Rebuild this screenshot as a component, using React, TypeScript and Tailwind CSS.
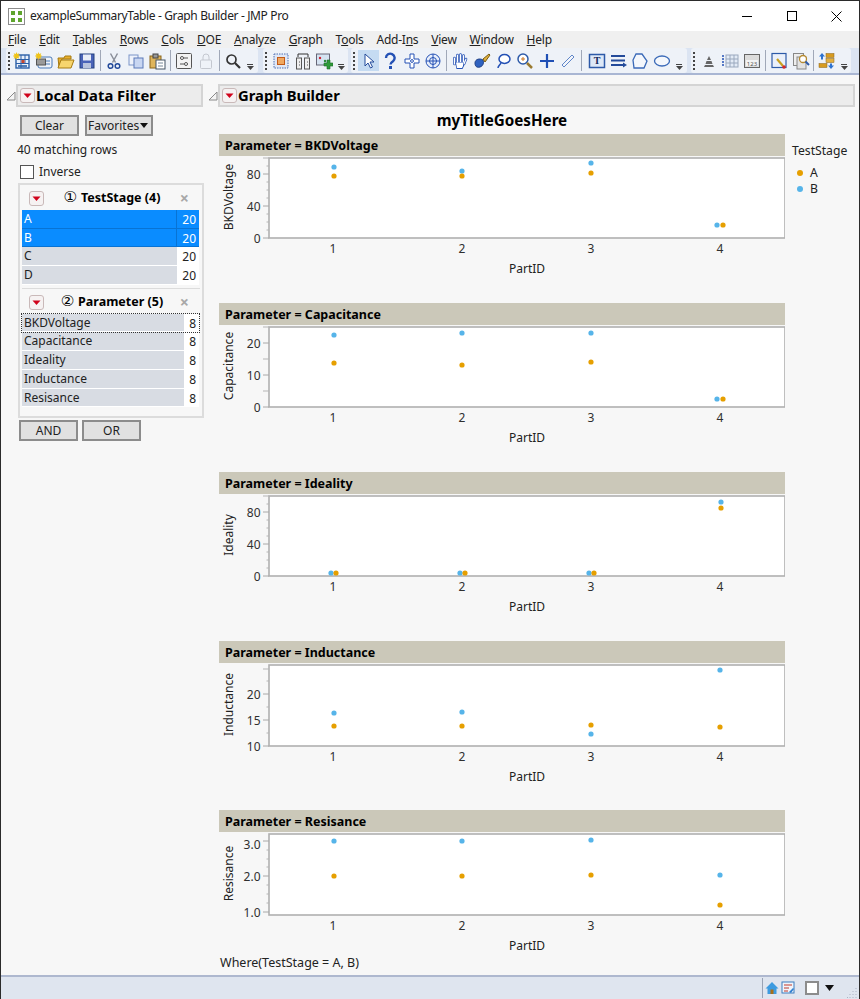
import React from 'react'

const FONT = { fontFamily: '"Noto Sans", "Open Sans", sans-serif' }
const BLUE = '#56b4e9'
const ORANGE = '#e69f00'

type Dot = [number, number, string]
interface PanelProps {
  name: string
  height: number
  labels: [string, number, number][]
  ticks: number[]
  longTicks: number[]
  dots: Dot[]
}

const panels: PanelProps[] = [
  {
    name: 'BKDVoltage', height: 80,
    labels: [['80', 18, 18], ['40', 50, 50], ['0', 82, 82]],
    ticks: [10, 26, 34, 42, 58, 66, 74],
    longTicks: [2],
    dots: [[115, 11, BLUE], [115, 20, ORANGE], [243, 15, BLUE], [243, 20, ORANGE], [372, 7, BLUE], [372, 17, ORANGE], [498, 69, BLUE], [504, 69, ORANGE]],
  },
  {
    name: 'Capacitance', height: 80,
    labels: [['20', 18, 18], ['10', 50, 50], ['0', 82, 82]],
    ticks: [],
    longTicks: [2, 34, 66],
    dots: [[115, 10, BLUE], [115, 38, ORANGE], [243, 8, BLUE], [243, 40, ORANGE], [372, 8, BLUE], [372, 37, ORANGE], [498, 74, BLUE], [504, 74, ORANGE]],
  },
  {
    name: 'Ideality', height: 80,
    labels: [['80', 18, 18], ['40', 50, 50], ['0', 82, 82]],
    ticks: [10, 26, 34, 42, 58, 66, 74],
    longTicks: [2],
    dots: [[112, 79, BLUE], [117, 79, ORANGE], [241, 79, BLUE], [246, 79, ORANGE], [370, 79, BLUE], [375, 79, ORANGE], [502, 8, BLUE], [502, 14, ORANGE]],
  },
  {
    name: 'Inductance', height: 81,
    labels: [['20', 31, 31], ['15', 57, 57], ['10', 83, 83]],
    ticks: [18, 44, 70],
    longTicks: [6],
    dots: [[115, 50, BLUE], [115, 63, ORANGE], [243, 49, BLUE], [243, 63, ORANGE], [372, 62, ORANGE], [372, 71, BLUE], [501, 7, BLUE], [501, 64, ORANGE]],
  },
  {
    name: 'Resisance', height: 81,
    labels: [['3.0', 9, 12], ['2.0', 44, 44], ['1.0', 80, 80]],
    ticks: [18, 27, 35, 53, 62, 71],
    longTicks: [],
    dots: [[115, 9, BLUE], [115, 44, ORANGE], [243, 9, BLUE], [243, 44, ORANGE], [372, 8, BLUE], [372, 43, ORANGE], [501, 43, BLUE], [501, 73, ORANGE]],
  },
]

const Chart = ({ name, height, labels, ticks, longTicks, dots }: PanelProps) => (
  <div className="w-[566px]">
    <div className="h-[22px] bg-[#cbc8b9] pl-[6px] text-[12.5px] leading-[23px] font-bold text-black">Parameter = {name}</div>
    <svg width="566" height="123" className="block">
      <rect x="50" y="2" width="516" height={height} fill="#fff" stroke="#b0b0b0" strokeWidth="1.6" />
      {labels.map(([t, y]) => <line key={t} x1="44" x2="50" y1={y} y2={y} stroke="#a8a8a8" />)}
      {longTicks.map((y) => <line key={y} x1="44" x2="50" y1={y} y2={y} stroke="#b5b5b5" />)}
      {ticks.map((y) => <line key={y} x1="47.5" x2="50" y1={y} y2={y} stroke="#b5b5b5" />)}
      {labels.map(([t, , y]) => (
        <text key={t} x="41.5" y={y + 4.5} textAnchor="end" fontSize="12" fill="#2f2f2f" style={FONT}>{t}</text>
      ))}
      <text transform={`translate(14 ${1 + height / 2}) rotate(-90)`} textAnchor="middle" fontSize="12" fill="#222" style={FONT}>{name}</text>
      {[1, 2, 3, 4].map((n, i) => (
        <text key={n} x={114 + i * 129} y={height + 17} textAnchor="middle" fontSize="12" fill="#2f2f2f" style={FONT}>{n}</text>
      ))}
      <text x="308" y={height + 37} textAnchor="middle" fontSize="12" fill="#222" style={FONT}>PartID</text>
      {dots.map(([x, y, c], i) => <circle key={i} cx={x} cy={y} r="2.6" fill={c} />)}
    </svg>
  </div>
)

const RedButton = () => (
  <svg width="15" height="15" viewBox="0 0 15 15" className="shrink-0">
    <rect x="0.5" y="0.5" width="14" height="14" rx="2.5" fill="#f6f2f2" stroke="#c9b9b9" />
    <path d="M3.5 5.5h8l-4 4.5z" fill="#d0021b" />
  </svg>
)

const Disclose = () => (
  <svg width="10" height="10" viewBox="0 0 10 10" className="shrink-0">
    <path d="M1 9h8V1z" fill="#f4f4f4" stroke="#8a8a8a" />
  </svg>
)

const OutlineHeader = ({ title, className }: { title: string; className: string }) => (
  <div className={`flex items-center ${className}`}>
    <Disclose />
    <div className="flex h-[23px] flex-1 items-center gap-[1px] border-2 border-[#d4d4d4] bg-[#ececec] pl-[2px] text-[14.8px] font-bold text-black">
      <RedButton />
      <span>{title}</span>
    </div>
  </div>
)

const GrayButton = ({ label, className }: { label: string; className: string }) => (
  <button className={`flex h-[21px] items-center justify-center border-2 border-[#8c8c8c] bg-[#e1e1e1] text-[12px] leading-[19px] text-[#222] ${className}`}>{label}</button>
)

const FilterHeader = ({ mark, title, height }: { mark: string; title: string; height: string }) => (
  <div className={`flex items-center pl-[7px] pr-[11px] ${height}`}>
    <RedButton />
    <div className="flex-1 text-center text-[12.5px] font-bold text-black">
      <span className="mr-[4px] text-[15px] leading-none font-normal" style={{ fontFamily: '"DejaVu Sans", sans-serif' }}>{mark}</span>{title}
    </div>
    <span className="text-[16px] leading-none font-bold text-[#a8a8a8]">×</span>
  </div>
)

const Row = ({ label, count, selected, focused, barWidth }: { label: string; count: number; selected?: boolean; focused?: boolean; barWidth: string }) => (
  <div className={`flex h-[18.7px] w-[177px] items-stretch text-[12px] ${selected ? 'border-b border-[#0873d4] bg-[#0a8cff] text-white' : 'bg-white text-[#222]'} ${focused ? 'outline-1 outline-dotted outline-[#333]' : ''}`}>
    <div className={`${barWidth} pl-[2px] leading-[18px] ${selected ? 'border-r border-[#0873d4]' : 'mb-[1px] bg-[#d8dce3]'}`}>{label}</div>
    <div className="flex-1 pr-[3px] text-right leading-[19px]">{count}</div>
  </div>
)

/* toolbar icons */
const I = ({ children }: { children: React.ReactNode }) => (
  <div className="flex h-[22px] w-[21.7px] shrink-0 items-center justify-center">
    <svg width="18" height="18" viewBox="0 0 18 18" fill="none">{children}</svg>
  </div>
)
const Grip = () => (
  <div className="ml-[2px] mr-[3px] flex h-[18px] w-[2px] shrink-0 flex-col justify-between">
    {[0, 1, 2, 3, 4].map((n) => <div key={n} className="h-[2px] w-[2px] bg-[#444]" />)}
  </div>
)
const Sep = () => <div className="mx-[2px] h-[21px] w-[1px] shrink-0 bg-[#a0a8b8]" />
const More = () => (
  <div className="ml-auto mr-[2px] flex h-[20px] w-[12px] shrink-0 flex-col items-center justify-end pb-[1px]">
    <div className="h-[1px] w-[6px] bg-[#444]" />
    <svg width="7" height="4" viewBox="0 0 7 4" className="mt-[1px]"><path d="M0 0h7L3.5 4z" fill="#444" /></svg>
  </div>
)
const Group = ({ w, children }: { w: string; children: React.ReactNode }) => (
  <div className={`flex h-[25px] shrink-0 items-center rounded-[3px] bg-[#eef2f8] ${w}`}>{children}</div>
)
const Sparkle = () => <path d="M3.500 0l.8 2 2-.8-.8 2 2 .8-2 .8.8 2-2-.8-.8 2-.8-2-2 .8.8-2-2-.8 2-.8-.8-2 2 .8z" fill="#f0c419" />

const Toolbar = () => (
  <div className="flex h-[27px] shrink-0 items-center border-b-2 border-[#a9b6d3] bg-[#dbe4f2] pl-[5px]">
    <Group w="w-[252px] mr-[5px]">
      <div className="-mr-[1.5px] flex"><Grip /></div>
      <I><rect x="3" y="3" width="13" height="13" fill="#e9f0fb" stroke="#2a5fa8" strokeWidth="1.400" /><path d="M3 7.500h13M3 11.500h13M8 3v13M12 3v9" stroke="#2a5fa8" /><rect x="8.500" y="8" width="3" height="3" fill="#c9472e" /><path d="M5 14h9" stroke="#2a5fa8" strokeWidth="1.600" /><Sparkle /></I>
      <I><rect x="3" y="5" width="14" height="11" rx="2" fill="#eef2f8" stroke="#4a7ab8" /><rect x="1.500" y="7" width="9" height="6" fill="#9a9a9a" stroke="#555" /><path d="M11 9h4M11 12h4" stroke="#4a7ab8" /><Sparkle /></I>
      <I><path d="M1 6h6l1-2h6v3H5l-3 8z" fill="#e8b030" stroke="#a67a10" /><path d="M4 8h13l-3 8H1z" fill="#f7d56d" stroke="#a67a10" /></I>
      <I><rect x="2" y="2" width="14" height="14" fill="#4a63b8" stroke="#23407f" /><rect x="5" y="2.500" width="8" height="6" fill="#e8edf7" /><rect x="5" y="11" width="8" height="5" fill="#b9c4dd" /></I>
      <Sep />
      <I><path d="M5.500 1.500l5 9M12.500 1.500l-5 9" stroke="#8a8f9a" strokeWidth="1.500" /><circle cx="5.500" cy="14" r="2.300" stroke="#234a9a" strokeWidth="1.500" /><circle cx="12.500" cy="14" r="2.300" stroke="#234a9a" strokeWidth="1.500" /></I>
      <I><rect x="2" y="3" width="9" height="10" fill="#eef2fb" stroke="#7a94c8" /><rect x="7" y="6" width="9" height="10" fill="#c8d6f2" stroke="#5a78b8" /></I>
      <I><rect x="2" y="4" width="11" height="12" fill="#dfb55c" stroke="#8a6518" /><rect x="5" y="2" width="5" height="4" fill="#999" stroke="#444" /><rect x="8" y="8" width="9" height="9" fill="#fff" stroke="#456" /><path d="M10 11h5M10 14h5" stroke="#789" /></I>
      <Sep />
      <I><rect x="1.500" y="1.500" width="15" height="15" rx="1" fill="#f3f3f3" stroke="#555" /><path d="M5 6h8M5 12h8" stroke="#555" /><circle cx="7" cy="6" r="1.500" fill="#fff" stroke="#555" /><circle cx="11" cy="12" r="1.500" fill="#fff" stroke="#555" /></I>
      <I><rect x="3.500" y="8" width="11" height="8.500" rx="1" stroke="#c4c8d0" /><path d="M6 8V5a3 3 0 0 1 6 0v3" stroke="#c4c8d0" /></I>
      <Sep />
      <I><circle cx="7.500" cy="7.500" r="4.500" stroke="#333" strokeWidth="1.700" /><path d="M11 11l5 5" stroke="#333" strokeWidth="2.200" /></I>
      <More />
    </Group>
    <Group w="w-[85px] mr-[3px]">
      <Grip />
      <I><rect x="2" y="2" width="14" height="14" fill="#dfe7f6" stroke="#4f6fb0" strokeDasharray="1.500 1" /><rect x="5.500" y="5.500" width="7" height="7" fill="#f0a860" stroke="#c25a18" /></I>
      <I><rect x="2.500" y="6" width="5" height="11" fill="#eee" stroke="#555" /><rect x="10.500" y="6" width="5" height="11" fill="#eee" stroke="#555" /><path d="M4 5V2h10v3" stroke="#333" /><path d="M5 10h1M13 10h1M5 13h1M13 13h1" stroke="#555" /></I>
      <I><rect x="1.500" y="2" width="13" height="11" fill="#d5e3f2" stroke="#667" /><circle cx="5" cy="6" r="1.200" fill="#c23" /><circle cx="10" cy="9" r="1.200" fill="#2a8a3a" /><path d="M12 8h3v3h3v3h-3v3h-3v-3H9v-3h3z" fill="#2e9b3a" stroke="#1e6b28" strokeWidth=".6" /></I>
      <More />
    </Group>
    <Group w="w-[336px] mr-[4px]">
      <Grip />
      <div className="flex h-[21px] w-[21px] shrink-0 items-center justify-center bg-[#c5dbf2]">
        <svg width="18" height="18" viewBox="0 0 18 18"><path d="M5 2v12l3-3 2.500 5 2-1-2.500-5h4z" fill="#fff" stroke="#234a9a" /></svg>
      </div>
      <I><path d="M5 6a4.300 4.300 0 1 1 7 3.300c-1.500 1-2.500 1.700-2.500 3.200" stroke="#2451b5" strokeWidth="2.400" /><rect x="8" y="14" width="3" height="3" fill="#2451b5" /></I>
      <I><path d="M7 2h4v5h5v4h-5v5H7v-5H2V7h5z" fill="#fff" stroke="#2451b5" /><circle cx="9" cy="9" r="1.400" stroke="#2451b5" /></I>
      <I><circle cx="9" cy="9" r="7" stroke="#2451b5" fill="#e7eefb" /><circle cx="9" cy="9" r="3.500" stroke="#2451b5" /><path d="M9 2v14M2 9h14" stroke="#2451b5" /></I>
      <Sep />
      <I>
        <path d="M3.500 6v6M6.500 3v7M9.500 2.500v7M12.500 3.500v6.500M15 7l-2 5" stroke="#2451b5" strokeWidth="2.600" strokeLinecap="round" />
        <path d="M4 10h9v4l-1.500 3h-6z" fill="#2451b5" />
        <path d="M3.500 6v6M6.500 3v7M9.500 2.500v7M12.500 3.500v6.500M15 7l-2 5" stroke="#fff" strokeWidth="1.200" strokeLinecap="round" />
        <path d="M5 10.500h7v3.500l-1 2h-5z" fill="#fff" />
      </I>
      <I><path d="M2 11c0-4 5-5 8-3 1 2 .5 6-3 7s-5-1-5-4z" fill="#2f62c0" stroke="#1d3f85" /><path d="M10 7l6-5 1 1-5 7z" fill="#e0b040" stroke="#7a5d10" /></I>
      <I><ellipse cx="10.500" cy="7" rx="5.500" ry="4.500" fill="#fff" stroke="#2451b5" strokeWidth="1.500" /><path d="M7 11c-1 2-3 3-3 5" stroke="#2451b5" strokeWidth="1.500" /></I>
      <I><circle cx="7" cy="7" r="5" fill="#fff" stroke="#2d5aa8" strokeWidth="1.500" /><path d="M5 7h4M7 5v4" stroke="#c72" /><path d="M11 11l5 5" stroke="#9a7a30" strokeWidth="2.500" /></I>
      <I><path d="M9 2v14M2 9h14" stroke="#1f4fb5" strokeWidth="2.200" /></I>
      <I><path d="M3 13L13 3l2 2L5 15z" fill="#f2f5fb" stroke="#5f86c8" /></I>
      <Sep />
      <div className="w-[2px] shrink-0" />
      <I><rect x="1.500" y="2.500" width="15" height="13" fill="#dde8f7" stroke="#2d5aa8" strokeWidth="1.500" /><text x="9" y="12" textAnchor="middle" fontSize="10" fontWeight="700" fill="#12275a" style={{ fontFamily: '"Liberation Serif", serif' }}>T</text></I>
      <I><path d="M1 4h14M1 8.500h14M1 13h12" stroke="#234a9a" strokeWidth="2" /><path d="M13 10.500l4 2.500-4 2.500z" fill="#234a9a" /></I>
      <I><path d="M5 2h6l5 7-3 7H3L2 8z" fill="#f4f7fc" stroke="#3b6ab8" strokeWidth="1.300" /></I>
      <I><ellipse cx="9" cy="9" rx="7.500" ry="5" fill="#f4f7fc" stroke="#3b6ab8" strokeWidth="1.300" /></I>
      <More />
    </Group>
    <Group w="w-[160px]">
      <Grip />
      <I><path d="M9 4l2 4H7zM6.500 9h5l1 3h-7zM5 13h8l1 2H4z" fill="#666" /></I>
      <I><path d="M1 3v12" stroke="#2451b5" strokeWidth="1.500" strokeDasharray="2 1" /><rect x="4" y="3" width="12" height="12" fill="#e3ebf6" stroke="#9aa8bd" /><path d="M8 3v12M12 3v12M4 7h12M4 11h12" stroke="#9aa8bd" /></I>
      <I><rect x="1.500" y="2.500" width="15" height="13" fill="#dcdcdc" stroke="#666" /><rect x="3" y="8" width="12" height="6" fill="#f3f3f3" /><text x="9" y="13.500" textAnchor="middle" fontSize="6" fill="#555" style={FONT}>123</text></I>
      <Sep />
      <I><rect x="2" y="1.500" width="14" height="14" fill="#eaf0fa" stroke="#2d5aa8" strokeWidth="1.200" /><path d="M7 7l6 7" stroke="#c8a020" strokeWidth="2.200" /><circle cx="14" cy="15" r="1.800" fill="#d62828" /></I>
      <I><rect x="1.500" y="1.500" width="10" height="12" fill="#eee" stroke="#888" /><rect x="5" y="5" width="9" height="12" fill="#e3e3e3" stroke="#888" /><circle cx="11" cy="7" r="3.500" fill="#fff" stroke="#b58a30" strokeWidth="1.300" /><path d="M13.500 9.500l3.500 3.500" stroke="#2d5aa8" strokeWidth="2" /></I>
      <Sep />
      <I><path d="M4 1l3 3.500H5v3H3v-3H1z" fill="#2e73d0" /><rect x="8" y="1.500" width="8" height="4" fill="#d79b20" stroke="#8a6518" strokeWidth=".5" /><rect x="8" y="6.500" width="8" height="4" fill="#e3b040" stroke="#8a6518" strokeWidth=".5" /><rect x="1" y="11.500" width="8" height="4" fill="#d79b20" stroke="#8a6518" strokeWidth=".5" /><path d="M13 17l-3-3.500h2v-2h2v2h2z" fill="#2e73d0" /></I>
      <More />
    </Group>
  </div>
)

const menus: [string, string, string][] = [
  ['', 'F', 'ile'], ['', 'E', 'dit'], ['', 'T', 'ables'], ['', 'R', 'ows'], ['', 'C', 'ols'], ['', 'D', 'OE'], ['', 'A', 'nalyze'],
  ['', 'G', 'raph'], ['T', 'o', 'ols'], ['Add-I', 'n', 's'], ['', 'V', 'iew'], ['', 'W', 'indow'], ['', 'H', 'elp'],
]

export default function App() {
  return (
    <div className="flex h-[999px] w-[860px] flex-col overflow-hidden border-x border-t border-[#2b2b2b] bg-[#f7f7f7] text-[#222]" style={FONT}>
      <div className="flex h-[30px] shrink-0 items-center bg-white pl-[7px]">
        <svg width="17" height="17" viewBox="0 0 17 17">
          <rect x="0.500" y="0.500" width="16" height="16" fill="#fff" stroke="#8c8c8c" />
          <path d="M3 3h4v4H3zM10 3h4v4h-4zM3 10h4v4H3zM10 10h4v4h-4z" fill="#5fa52e" />
        </svg>
        <span className="ml-[5px] text-[12px] tracking-[-0.36px]">exampleSummaryTable - Graph Builder - JMP Pro</span>
        <div className="ml-auto flex items-center">
          <div className="flex w-[45px] justify-center"><div className="h-[1px] w-[10px] bg-black" /></div>
          <div className="flex w-[45px] justify-center"><div className="h-[10px] w-[10px] border border-black" /></div>
          <div className="flex w-[45px] justify-center">
            <svg width="11" height="11" viewBox="0 0 11 11"><path d="M.5.500l10 10M10.500.500l-10 10" stroke="#000" /></svg>
          </div>
        </div>
      </div>
      <div className="flex h-[17px] shrink-0 items-center gap-[13px] bg-[#f0f0f0] pl-[7px] text-[12px] tracking-[-0.25px]">
        {menus.map(([a, u, b]) => <span key={a + u + b}>{a}<span className="underline">{u}</span>{b}</span>)}
      </div>
      <Toolbar />

      <div className="flex flex-1 pt-[9px]">
        <div className="w-[207px] shrink-0">
          <OutlineHeader title="Local Data Filter" className="ml-[5px] w-[197px]" />
          <div className="flex gap-[6px] pl-[19px] pt-[8px]">
            <GrayButton label="Clear" className="w-[59px]" />
            <button className="flex h-[21px] w-[68px] items-center justify-between border-2 border-[#8c8c8c] bg-[#e1e1e1] px-[1px] text-[12px]">
              Favorites
              <svg width="8" height="5" viewBox="0 0 8 5" className="mr-[2px]"><path d="M0 0h8L4 5z" fill="#111" /></svg>
            </button>
          </div>
          <div className="pl-[16px] pt-[5px] text-[12px] leading-[18px]">40 matching rows</div>
          <div className="flex items-center pl-[19px] pt-[4px] text-[12px]">
            <div className="h-[14px] w-[14px] border border-[#555] bg-white" />
            <span className="ml-[5px]">Inverse</span>
          </div>
          <div className="ml-[17px] mt-[2px] h-[235px] w-[186px] border-2 border-[#dcdcdc] px-[2px] pt-[1px]">
            <FilterHeader mark="①" title="TestStage (4)" height="h-[24px]" />
            <Row label="A" count={20} selected barWidth="w-[155px]" />
            <Row label="B" count={20} selected barWidth="w-[155px]" />
            <Row label="C" count={20} barWidth="w-[155px]" />
            <Row label="D" count={20} barWidth="w-[155px]" />
            <div className="mt-[3px] h-[1px] bg-[#dcdcdc]" />
            <FilterHeader mark="②" title="Parameter (5)" height="h-[25px] pt-[2px]" />
            <Row label="BKDVoltage" count={8} focused barWidth="w-[162px]" />
            <Row label="Capacitance" count={8} barWidth="w-[162px]" />
            <Row label="Ideality" count={8} barWidth="w-[162px]" />
            <Row label="Inductance" count={8} barWidth="w-[162px]" />
            <Row label="Resisance" count={8} barWidth="w-[162px]" />
          </div>
          <div className="flex gap-[4px] pl-[18px] pt-[2px]">
            <GrayButton label="AND" className="w-[59px]" />
            <GrayButton label="OR" className="w-[59px]" />
          </div>
        </div>

        <div className="flex-1">
          <OutlineHeader title="Graph Builder" className="w-[647px]" />
          <div className="flex pl-[11px]">
            <div className="w-[566px]">
              <div className="h-[27px] pt-[1px] text-center text-[15.2px] leading-[24px] font-bold text-black">myTitleGoesHere</div>
              <div className="flex flex-col gap-[24px]">
                {panels.map((p) => <Chart key={p.name} {...p} />)}
              </div>
              <div className="pl-[1px] pt-[1px] text-[12.5px] leading-[14px]">Where(TestStage = A, B)</div>
            </div>
            <div className="pl-[7px] pt-[36px] text-[12.2px]">
              <div className="leading-[16px]">TestStage</div>
              <div className="mt-[6px] flex h-[16px] items-center pl-[5px]"><div className="h-[6px] w-[6px] rounded-full bg-[#e69f00]" /><span className="ml-[7px]">A</span></div>
              <div className="flex h-[16px] items-center pl-[5px]"><div className="h-[6px] w-[6px] rounded-full bg-[#56b4e9]" /><span className="ml-[7px]">B</span></div>
            </div>
          </div>
        </div>
      </div>

      <div className="flex h-[24px] shrink-0 items-center border-t-2 border-[#aeb8cf] bg-[#dfe5ef]">
        <div className="ml-[761px] h-[20px] w-[1px] bg-[#9aa3b5]" />
        <svg width="14" height="14" viewBox="0 0 14 14" className="ml-[2px]"><path d="M7 1L0.500 7.500H2.500V13H11.500V7.500H13.500z" fill="#3d9be0" /><rect x="5.500" y="8.500" width="3" height="4.500" fill="#a8701a" /></svg>
        <svg width="14" height="14" viewBox="0 0 14 14" className="ml-[2px]"><rect x="1" y="1" width="12" height="11" fill="#f0f4fa" stroke="#3d7fc0" /><path d="M3 4h8M3 7h5M3 10h4" stroke="#c0392b" /><path d="M8 11l4-4 1 1-3 4z" fill="#2f7fd0" /></svg>
        <div className="ml-[10px] h-[14px] w-[14px] border-2 border-[#8c8c8c] bg-white" />
        <svg width="9" height="6" viewBox="0 0 9 6" className="ml-[6px]"><path d="M0 0h9L4.500 6z" fill="#111" /></svg>
        <svg width="11" height="11" viewBox="0 0 11 11" className="ml-auto mr-[1px] self-end mb-[1px]">
          <path d="M8.500 1.500h1M5.500 4.500h1M8.500 4.500h1M2.500 7.500h1M5.500 7.500h1M8.500 7.500h1M0 10.500h1M2.500 10.500h1M5.500 10.500h1M8.500 10.500h1" stroke="#aab3c4" />
        </svg>
      </div>
    </div>
  )
}
